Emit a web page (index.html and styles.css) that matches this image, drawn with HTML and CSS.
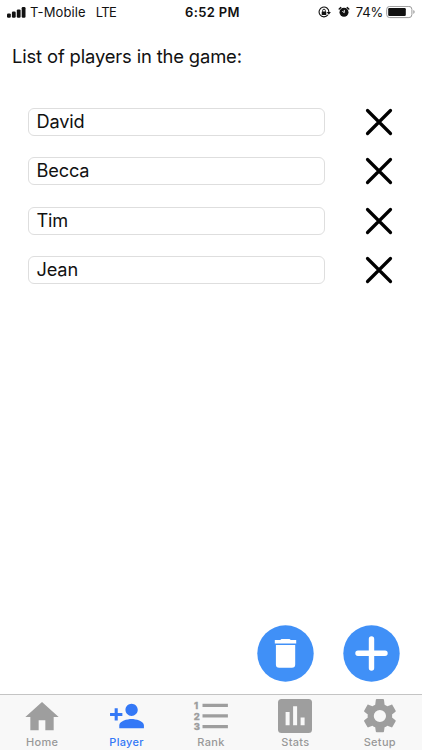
FILE: index.html
```html
<!DOCTYPE html>
<html lang="en">
<head>
<meta charset="utf-8">
<title>Players</title>
<link rel="stylesheet" href="styles.css">
</head>
<body>
<div class="app">
  <header class="status">
    <div class="status-left">
      <svg class="signal" width="19" height="11" viewBox="0 0 19 11"><rect x="0" y="6.4" width="3.8" height="4.4" rx="1.2"/><rect x="4.9" y="4.5" width="3.8" height="6.3" rx="1.2"/><rect x="9.8" y="2.4" width="3.8" height="8.4" rx="1.2"/><rect x="14.7" y="0" width="3.8" height="10.8" rx="1.2"/></svg>
      <span class="carrier">T-Mobile</span>
      <span class="network">LTE</span>
    </div>
    <span class="time">6:52 PM</span>
    <div class="status-right">
      <svg width="13" height="13" viewBox="0 0 13 13"><path d="M9.9 8.9A4.9 4.9 0 1 1 10.9 6" fill="none" stroke="#111" stroke-width="1.1"/><path d="M8.7 6h4.2l-2.1 2.7z"/><rect x="3.7" y="5.5" width="4.6" height="3.6" rx=".5"/><path d="M4.6 5.8V4.6a1.4 1.4 0 0 1 2.8 0v1.2" fill="none" stroke="#111" stroke-width=".9"/></svg>
      <svg class="alarm" width="12" height="12" viewBox="0 0 12 12"><circle cx="6" cy="6.3" r="4.5"/><path d="M1.2 3 2.8 1.6M10.8 3 9.2 1.6" stroke="#111" stroke-width="1.4" stroke-linecap="round"/><path d="M6.3 3.9v2.7L4.3 5.4" fill="none" stroke="#fff" stroke-width=".9"/></svg>
      <span class="percent">74%</span>
      <svg width="30" height="13" viewBox="0 0 30 13"><rect x=".7" y=".4" width="25.2" height="11.2" rx="3" fill="none" stroke="#999" stroke-width="1"/><rect x="2.2" y="2" width="17.6" height="8" rx="1.2"/><path d="M27.3 4.1q1.4.7 1.4 1.9t-1.4 1.9z" fill="#999"/></svg>
    </div>
  </header>

  <main class="content">
    <h1 class="title">List of players in the game:</h1>
    <ul class="players">
      <li class="player"><span class="field">David</span><svg class="remove" viewBox="0 0 28 28"><path d="M2.500 2.500 25.500 25.500M25.500 2.500 2.500 25.500"/></svg></li>
      <li class="player"><span class="field">Becca</span><svg class="remove" viewBox="0 0 28 28"><path d="M2.500 2.500 25.500 25.500M25.500 2.500 2.500 25.500"/></svg></li>
      <li class="player"><span class="field">Tim</span><svg class="remove" viewBox="0 0 28 28"><path d="M2.500 2.500 25.500 25.500M25.500 2.500 2.500 25.500"/></svg></li>
      <li class="player"><span class="field">Jean</span><svg class="remove" viewBox="0 0 28 28"><path d="M2.500 2.500 25.500 25.500M25.500 2.500 2.500 25.500"/></svg></li>
    </ul>
    <div class="actions">
      <svg class="fab" viewBox="0 0 57 57"><circle cx="28.500" cy="28.500" r="28.200"/><path fill="#fff" d="M17.800 15h5.600q.4-1 1.400-1h7.400q1 0 1.400 1h5.600v3.400H17.800zM18.900 20h19.300v19.400q0 3.300-3.300 3.300H22.200q-3.300 0-3.300-3.300z"/></svg>
      <svg class="fab" viewBox="0 0 57 57"><circle cx="28.500" cy="28.500" r="28.200"/><path d="M28.500 14v29M15 28.300h27" fill="none" stroke="#fff" stroke-width="5.400" stroke-linecap="round"/></svg>
    </div>
  </main>

  <nav class="tabs">
    <div class="tab">
      <svg class="icon" viewBox="0 0 40 40"><path transform="scale(1.667)" d="M10 20v-6h4v6h5v-8h3L12 3 2 12h3v8z"/></svg>
      <span class="label">Home</span>
    </div>
    <div class="tab active">
      <svg class="icon" viewBox="0 0 40 40"><path transform="translate(1.500 .5) scale(1.540)" d="M15 12c2.210 0 4-1.790 4-4s-1.790-4-4-4-4 1.790-4 4 1.790 4 4 4zm-9-2V7H4v3H1v2h3v3h2v-3h3v-2H6zm9 4c-2.670 0-8 1.340-8 4v2h16v-2c0-2.660-5.330-4-8-4z"/></svg>
      <span class="label">Player</span>
    </div>
    <div class="tab">
      <svg class="icon" viewBox="0 0 40 40"><path d="M11.500 6.700h25.400v3.300H11.500zM11.500 17.300h25.400v3.300H11.500zM11.500 28h25.400v3.300H11.500z"/><g class="digits"><text x="3" y="11.800">1</text><text x="2.700" y="22.500">2</text><text x="2.700" y="33.200">3</text></g></svg>
      <span class="label">Rank</span>
    </div>
    <div class="tab">
      <svg class="icon" viewBox="0 0 40 40"><rect x="3" y="2" width="34" height="34" rx="3.500"/><path fill="#f8f8f8" d="M10.600 15h4v13.300h-4zM18.100 9.300h4v19h-4zM25.600 20.600h4v7.700h-4z"/></svg>
      <span class="label">Stats</span>
    </div>
    <div class="tab">
      <svg class="icon" viewBox="0 0 40 40"><path transform="translate(-.5 -1.400) scale(1.700)" d="M19.140 12.940c.04-.3.060-.610.060-.940 0-.320-.020-.640-.070-.940l2.030-1.580c.18-.14.230-.410.120-.610l-1.920-3.320c-.12-.22-.37-.29-.59-.22l-2.390.960c-.5-.38-1.030-.7-1.620-.94L14.400 2.400c-.04-.24-.24-.4-.48-.4h-3.840c-.24 0-.43.16-.47.4L9.250 5.350c-.59.240-1.130.570-1.620.940L5.240 5.330c-.22-.08-.47 0-.59.220L2.740 8.870c-.12.210-.08.470.12.610l2.030 1.580c-.05.3-.09.630-.09.940s.02.640.070.940l-2.030 1.580c-.18.140-.23.410-.12.610l1.920 3.320c.12.220.370.290.590.220l2.390-.96c.5.380 1.030.700 1.620.940l.36 2.540c.05.240.240.410.480.410h3.840c.24 0 .44-.17.470-.41l.36-2.540c.59-.24 1.130-.56 1.620-.94l2.390.96c.22.080.470 0 .590-.22l1.920-3.320c.12-.22.070-.47-.12-.61zM12 15.600A3.600 3.600 0 1 1 12 8.400a3.600 3.600 0 0 1 0 7.200z"/></svg>
      <span class="label">Setup</span>
    </div>
  </nav>
</div>
</body>
</html>
```
FILE: styles.css
```css
* { box-sizing: border-box; }
body { margin: 0; background: #fff; color: #111; font-family: Inter, "Liberation Sans", sans-serif; }
svg { display: block; flex: none; fill: #111; }
.app { display: flex; flex-direction: column; width: 422px; height: 750px; }

.status { display: grid; grid-template-columns: 1fr auto 1fr; align-items: center; height: 24px; padding: 0 6px 0 7px; font-size: 13px; line-height: 24px; white-space: nowrap; }
.status-left, .status-right { display: flex; align-items: center; }
.status-right { justify-content: flex-end; }
.carrier { margin-left: 4px; letter-spacing: .12px; }
.network { margin-left: 10px; letter-spacing: -.6px; }
.time { padding-left: 2px; font-weight: 600; letter-spacing: .35px; }
.alarm { margin-left: 7px; }
.percent { margin: 0 3px 0 6px; letter-spacing: -.2px; }

.content { flex: 1; display: flex; flex-direction: column; }
.title { margin: 19px 0 0 12px; font-size: 18.4px; line-height: 26px; font-weight: 400; letter-spacing: -.15px; }
.players { list-style: none; margin: 39px 0 0; padding: 0 29px 0 28px; display: flex; flex-direction: column; gap: 21.4px; }
.player { display: flex; align-items: center; justify-content: space-between; height: 28px; }
.field { width: 297.4px; height: 28px; padding-left: 7.5px; border: 1px solid #dedede; border-radius: 6px; font-size: 18.2px; line-height: 24px; letter-spacing: -.15px; }
.remove { width: 28px; height: 28px; fill: none; stroke: #000; stroke-width: 3.2; stroke-linecap: round; }
.actions { display: flex; justify-content: flex-end; gap: 28.5px; margin: auto 22.5px 12px 0; }
.fab { width: 57px; height: 57px; fill: #4090f7; }

.tabs { display: grid; grid-template-columns: repeat(5, 1fr); height: 56px; border-top: 1px solid #c4c4c4; background: #f8f8f8; }
.tab { display: flex; flex-direction: column; align-items: center; padding-top: 2px; color: #989898; }
.icon { width: 40px; height: 40px; fill: #9e9e9e; }
.digits { font: 800 9.5px Inter, "Liberation Sans", sans-serif; stroke: #9e9e9e; stroke-width: .3; }
.label { margin-top: -2px; font-size: 11px; line-height: 14px; font-weight: 500; letter-spacing: .3px; }
.active { color: #3478f6; }
.active .icon { fill: #3478f6; }
```
